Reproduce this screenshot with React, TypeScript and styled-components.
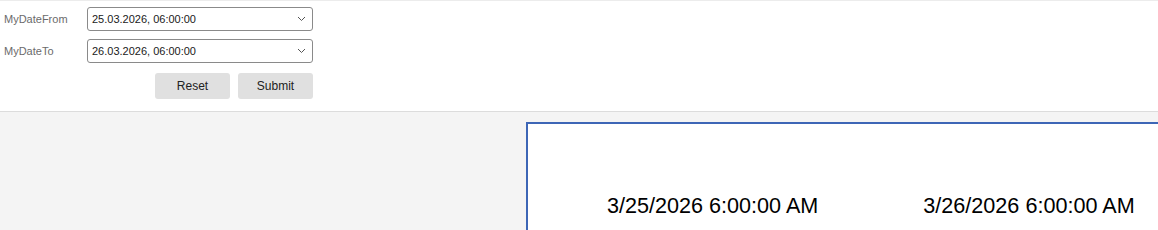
import React from "react";
import styled, { createGlobalStyle } from "styled-components";

const Global = createGlobalStyle`
	body {
		margin: 0;
		font-family: "Liberation Sans", Arial, sans-serif;
		background: #ffffff;
		overflow: hidden;
	}
`;

//Top form area
const Header = styled.div`
	border-top: 1px solid #ececec;
	border-bottom: 1px solid #dcdcdc;
	padding: 6px 0 12px 4px;
	display: flex;
	flex-direction: column;
	gap: 8px;
`;

const Row = styled.div`
	display: flex;
	align-items: center;
	width: 309px;
`;

const Label = styled.div`
	width: 83px;
	font-size: 11px;
	color: #6b6b6b;
`;

const Picker = styled.div`
	width: 226px;
	height: 24px;
	box-sizing: border-box;
	border: 1px solid #8a8a8a;
	border-radius: 3px;
	display: flex;
	align-items: center;
	justify-content: space-between;
	padding: 0 6px 0 4px;
	font-size: 11px;
	color: #1a1a1a;
	background: #fff;
`;

const Buttons = styled.div`
	display: flex;
	justify-content: flex-end;
	gap: 8px;
	width: 309px;
	margin-top: 2px;
`;

const Button = styled.button`
	width: 75px;
	height: 26px;
	border: none;
	border-radius: 3px;
	background: #e0e0e0;
	font-family: "Liberation Sans", Arial, sans-serif;
	font-size: 12px;
	color: #222;
	padding: 0;
`;

//Lower area
const Body = styled.div`
	background: #f4f4f4;
	padding: 10px 0 0 526px;
	height: 108px;
	overflow: hidden;
`;

const Card = styled.div`
	border: 2px solid #3d66b6;
	border-right: none;
	background: #fff;
	height: 150px;
	box-sizing: border-box;
	display: flex;
	align-items: flex-start;
	padding: 69px 0 0 79px;
	gap: 105px;
`;

const Stamp = styled.span`
	font-size: 21.6px;
	color: #000;
	white-space: nowrap;
`;

const Chevron = () => (
	<svg width="9" height="6" viewBox="0 0 9 6">
		<path d="M1 1 L4.5 4.5 L8 1" stroke="#555" strokeWidth="1" fill="none" />
	</svg>
);

export function App() {
	return (
		<>
			<Global />
			<Header>
				<Row>
					<Label>MyDateFrom</Label>
					<Picker>
						25.03.2026, 06:00:00
						<Chevron />
					</Picker>
				</Row>
				<Row>
					<Label>MyDateTo</Label>
					<Picker>
						26.03.2026, 06:00:00
						<Chevron />
					</Picker>
				</Row>
				<Buttons>
					<Button>Reset</Button>
					<Button>Submit</Button>
				</Buttons>
			</Header>
			<Body>
				<Card>
					<Stamp>3/25/2026 6:00:00 AM</Stamp>
					<Stamp>3/26/2026 6:00:00 AM</Stamp>
				</Card>
			</Body>
		</>
	);
}

export default App;
